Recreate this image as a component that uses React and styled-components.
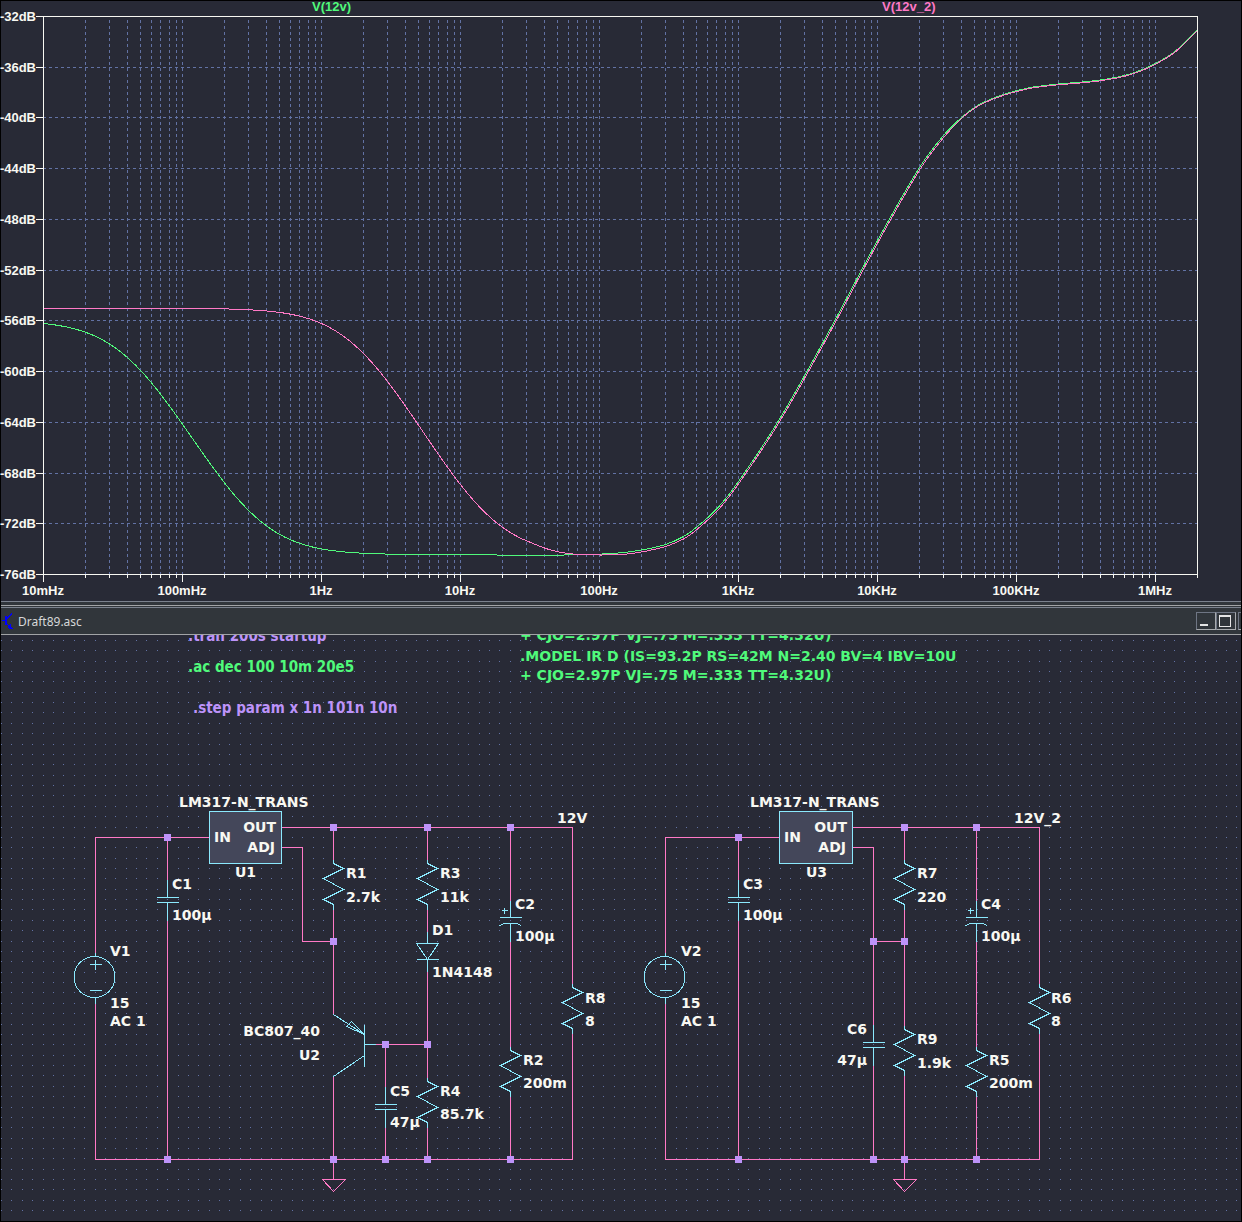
import React from "react";
import styled, { createGlobalStyle } from "styled-components";

const color = {
  background: "#282a36",
  frame: "#31363b",
  text: "#f8f8f2",
  grid: "#6272a4",
  pink: "#ff79c6",
  green: "#50fa7b",
  purple: "#bd93f9",
  cyan: "#8be9fd",
  fill: "#44475a",
};

const GlobalStyle = createGlobalStyle`
  * { box-sizing: border-box; }
  body { margin: 0; background: #000; }
`;

const Workspace = styled.main`
  display: flex;
  flex-direction: column;
  border: 1px solid #000;
  background: ${color.background};
`;

const Pane = styled.section`
  background: ${color.background};
`;

const Drawing = styled.svg`
  display: block;
  width: 100%;
  height: auto;
  overflow: ${(p) => (p.$clipped ? "hidden" : "visible")};
  shape-rendering: crispEdges;
`;

const Splitter = styled.div`
  display: flex;
  flex-direction: column;
  gap: 3px;
  background: ${color.frame};
  border-top: 1px solid #7b828e;
  border-bottom: 1px solid #7b828e;
  padding: 3px 0 1px;
`;

const SplitterEdge = styled.div`
  height: 1px;
  background: #a2a4a6;
`;

const TitleBar = styled.header`
  display: flex;
  align-items: center;
  height: 27px;
  background: ${color.frame};
  border-bottom: 1px solid #a2a4a6;
`;

const FileIcon = styled.svg`
  display: block;
  width: 17px;
  height: 18px;
  flex: none;
`;

const Title = styled.h1`
  flex: 1;
  margin: 0;
  color: #d6d8d9;
  font: 400 12px/16px "Noto Sans", sans-serif;
  padding-top: 2px;
`;

const WindowControls = styled.div`
  display: flex;
  flex: none;
  width: 45px;
  overflow: hidden;
`;

const ControlButton = styled.button`
  display: flex;
  flex: none;
  width: 20px;
  height: 18px;
  margin: 0 ${(p) => (p.$spaced ? "2px" : "0")} 0 0;
  padding: 0;
  border: 1px solid;
  border-color: #6f7684 #a8abae #a8abae #6f7684;
  background: ${color.frame};
`;

const Label = styled.text`
  fill: ${(p) => p.$color || color.text};
  font: 700 14px "DejaVu Sans", sans-serif;
`;

const Directive = styled.text`
  fill: ${(p) => p.$color};
  font: ${(p) =>
    p.$model
      ? '700 14px "DejaVu Sans", sans-serif'
      : '700 15px "DejaVu Sans Condensed", "DejaVu Sans", sans-serif'};
  white-space: pre;
`;

const AxisLabel = styled.text`
  fill: ${(p) => p.$color || color.text};
  font: 700 13px "Liberation Sans", Arial, sans-serif;
`;

const Trace = styled.path`
  fill: none;
  stroke: ${(p) => p.$color};
`;

const Stroke = styled.path`
  fill: none;
  stroke: ${(p) => p.$color};
`;

/* ---------- frequency plot ---------- */

const X0 = 43;
const X1 = 1197;
const Y0 = 16;
const Y1 = 574;
const DECADE = 139;

const levels = Array.from({ length: 12 }, (_, i) => ({
  text: `${-32 - 4 * i}dB`,
  y: Math.round(Y0 + i * 50.73 - 0.05),
}));

const decades = ["10mHz", "100mHz", "1Hz", "10Hz", "100Hz", "1KHz", "10KHz", "100KHz", "1MHz"];

const columns = [];
decades.forEach((_, d) => {
  for (let m = 1; m < 10; m += 1) {
    const x = Math.round(X0 + DECADE * (d + Math.log10(m)));
    if (x < X1) columns.push({ x, major: m === 1 });
  }
});

const dbToY = (db) => Y0 + ((-32 - db) * (Y1 - Y0)) / 44;

function shelf(from, to, start, pole, zero) {
  const points = [];
  for (let x = from; x <= to; x += 4) {
    const f = 10 ** ((x - X0) / DECADE - 2);
    const db = start - 10 * Math.log10(1 + (f / pole) ** 2) + 10 * Math.log10(1 + (f / zero) ** 2);
    points.push([x, dbToY(db)]);
  }
  return points;
}

const rise = [
  [738, 481], [777, 422], [823, 341], [877, 240], [919, 167], [943, 135], [961, 117],
  [974, 107], [985, 101], [1003, 94], [1017, 90], [1033, 86.5], [1058, 83.5], [1082, 81.5],
  [1100, 79.5], [1124, 75], [1142, 69], [1155, 63], [1175, 50.5], [1197, 29],
];

const greenPoints = [
  ...shelf(43, 480, -55.95, 0.0402, 0.338),
  [530, 555], [549, 555], [577, 554], [613, 553], [641, 549.5],
  [665, 544], [683, 536], [697, 526], [718, 506.5],
  ...rise,
];

const pinkPoints = [
  ...shelf(43, 525, -55, 1.75, 16.5),
  [544, 547.5], [556, 551], [568, 553], [580, 554], [600, 554.5], [622, 554],
  [641, 551.5], [665, 546], [683, 538.5], [697, 528.5], [718, 509],
  ...rise.map(([x, y]) => [x < 960 ? x + 1 : x, x < 960 ? y + 1 : y + 0.8]),
];

function toPath(points) {
  let d = `M${points[0][0]} ${points[0][1]}`;
  for (let i = 0; i < points.length - 1; i += 1) {
    const a = points[Math.max(i - 1, 0)];
    const b = points[i];
    const c = points[i + 1];
    const e = points[Math.min(i + 2, points.length - 1)];
    const h = (c[0] - b[0]) / 3;
    const s1 = (c[1] - a[1]) / (c[0] - a[0]);
    const s2 = (e[1] - b[1]) / (e[0] - b[0]);
    d += `C${b[0] + h} ${b[1] + h * s1} ${c[0] - h} ${c[1] - h * s2} ${c[0]} ${c[1]}`;
  }
  return d;
}

function FrequencyPlot() {
  return (
    <Drawing viewBox="1 1 1240 600" role="img" aria-label="Frequency response">
      <g transform="translate(0.5 0.5)">
        <g stroke={color.grid} strokeDasharray="3 3">
          {columns.slice(1).map(({ x }) => (
            <path key={x} d={`M${x} 19.5V${Y1}`} />
          ))}
          {levels.slice(1, -1).map(({ y }) => (
            <path key={y} d={`M${X0 - 0.5} ${y}H${X1}`} />
          ))}
        </g>
        <Trace $color={color.green} d={toPath(greenPoints)} />
        <Trace $color={color.pink} d={toPath(pinkPoints)} />
        <Stroke
          $color={color.text}
          d={
            `M${X0} ${Y0}H${X1}V577.5M${X0} ${Y0}V${Y1}H${X1}` +
            levels.map(({ y }) => `M35.5 ${y}H${X0}`).join("") +
            columns.map(({ x, major }) => `M${x} ${Y1}V${major ? 581.5 : 577.5}`).join("")
          }
        />
      </g>
      {levels.map(({ text, y }) => (
        <AxisLabel key={text} x="36" y={y + 5} textAnchor="end">{text}</AxisLabel>
      ))}
      {decades.map((text, i) => (
        <AxisLabel key={text} x={X0 + i * DECADE} y="595" textAnchor="middle">{text}</AxisLabel>
      ))}
      <AxisLabel $color={color.green} x="312" y="11">V(12v)</AxisLabel>
      <AxisLabel $color={color.pink} x="882" y="11">V(12v_2)</AxisLabel>
    </Drawing>
  );
}

/* ---------- schematic ---------- */

const dots = (() => {
  let d = "";
  for (let r = 0; r < 56; r += 1) {
    const y = 640 + Math.floor(r * 10.37 + 0.35);
    for (let c = 0; c < 120; c += 1) d += `M${Math.floor(1.6 + c * 10.38)} ${y + 0.5}h1`;
  }
  return d;
})();

const Resistor = ({ x, y }) => (
  <Stroke
    $color={color.cyan}
    d={`M${x} ${y}v4l10 5l-20 10l20 11l-20 10l10 5v5`}
  />
);

const Capacitor = ({ x, y, lead = 18 }) => (
  <Stroke
    $color={color.cyan}
    d={`M${x} ${y - lead}V${y}M${x - 10.5} ${y}h22M${x - 10.5} ${y + 5}h22M${x} ${y + 5}v${lead}`}
  />
);

const PolarCapacitor = ({ x }) => (
  <Stroke
    $color={color.cyan}
    d={`M${x} 900V917M${x - 11} 917h22M${x - 11} 925l5 -2h12l5 2M${x} 923V941M${x - 9} 910h6M${x - 6} 907v6`}
  />
);

const Source = ({ x }) => (
  <g fill="none" stroke={color.cyan}>
    <circle cx={x - 1} cy="976.5" r="20.5" />
    <path d={`M${x} 952v4M${x} 997v6M${x - 6} 964h12M${x} 959v10M${x - 6} 990h12`} />
  </g>
);

const Regulator = ({ x, width }) => (
  <rect x={x} y="811" width={width} height="52" fill={color.fill} stroke={color.cyan} />
);

const Ground = ({ x }) => (
  <Stroke $color={color.pink} d={`M${x} 1159V1179M${x - 11} 1179h23l-12 12z`} />
);

const wires = [
  "M95 952V837H209M167 837V879M167 920V1159M281 827H572V983M281 847H302V941H333",
  "M333 827V859M333 909V1014M427 827V859M427 909V931M427 971V1077M427 1127V1159",
  "M375 1044H427M385 1044V1087M385 1127V1159M333 1076V1159M510 827V900M510 941V1046",
  "M510 1095V1159M572 1033V1159H95V1003",
  "M665 952V837H779M738 837V879M738 920V1159M852 827H1039V983M852 847H873V1025",
  "M873 1065V1159M873 941H904M904 827V859M904 909V1025M904 1075V1159",
  "M976 827V900M976 941V1046M976 1095V1159M1039 1033V1159H665V1003",
].join("");

const junctions = [
  [167, 837], [333, 827], [427, 827], [510, 827], [333, 941], [385, 1044], [427, 1044],
  [167, 1159], [333, 1159], [385, 1159], [427, 1159], [510, 1159],
  [738, 837], [904, 827], [976, 827], [873, 941], [904, 941],
  [738, 1159], [873, 1159], [904, 1159], [976, 1159],
];

const labels = [
  ["LM317-N_TRANS", 179, 807], ["IN", 214, 842], ["OUT", 276, 832, "end"], ["ADJ", 275, 852, "end"],
  ["U1", 235, 877], ["C1", 172, 889], ["100µ", 172, 920], ["R1", 346, 878], ["2.7k", 346, 902],
  ["V1", 110, 956], ["15", 110, 1008], ["AC 1", 110, 1026], ["R3", 440, 878], ["11k", 440, 902],
  ["D1", 432, 935], ["1N4148", 432, 977], ["C2", 515, 909], ["100µ", 515, 941], ["12V", 557, 823],
  ["R8", 585, 1003], ["8", 585, 1026], ["BC807_40", 320, 1036, "end"], ["U2", 320, 1060, "end"],
  ["C5", 390, 1096], ["47µ", 390, 1127], ["R4", 440, 1096], ["85.7k", 440, 1119],
  ["R2", 523, 1065], ["200m", 523, 1088],
  ["LM317-N_TRANS", 750, 807], ["IN", 784, 842], ["OUT", 847, 832, "end"], ["ADJ", 846, 852, "end"],
  ["U3", 806, 877], ["C3", 743, 889], ["100µ", 743, 920], ["R7", 917, 878], ["220", 917, 902],
  ["V2", 681, 956], ["15", 681, 1008], ["AC 1", 681, 1026], ["C4", 981, 909], ["100µ", 981, 941],
  ["12V_2", 1014, 823], ["R6", 1051, 1003], ["8", 1051, 1026], ["C6", 867, 1034, "end"],
  ["47µ", 867, 1065, "end"], ["R9", 917, 1044], ["1.9k", 917, 1068], ["R5", 989, 1065],
  ["200m", 989, 1088],
];

const directives = [
  [".tran 200s startup", 188, 641, color.purple],
  [".ac dec 100 10m 20e5", 188, 672, color.green],
  [".step param x 1n 101n 10n", 193, 713, color.purple],
  ["+ CJO=2.97P VJ=.75 M=.333 TT=4.32U)", 520, 640, color.green, true],
  [".MODEL IR D (IS=93.2P RS=42M N=2.40 BV=4 IBV=10U", 520, 661, color.green, true],
  ["+ CJO=2.97P VJ=.75 M=.333 TT=4.32U)", 520, 680, color.green, true],
];

function Schematic() {
  return (
    <Drawing $clipped viewBox="1 635 1240 586" role="img" aria-label="Schematic">
      <Stroke $color={color.grid} d={dots} />
      <g transform="translate(0.5 0.5)">
        <Stroke $color={color.pink} d={wires} />
        <Regulator x={209} width={72} />
        <Regulator x={779} width={73} />
        <Source x={95} />
        <Source x={665} />
        <Capacitor x={167} y={897} />
        <Capacitor x={738} y={897} />
        <Capacitor x={385} y={1104} />
        <Capacitor x={873} y={1042} />
        <PolarCapacitor x={510} />
        <PolarCapacitor x={976} />
        <Resistor x={333} y={859} />
        <Resistor x={427} y={859} />
        <Resistor x={427} y={1077} />
        <Resistor x={510} y={1046} />
        <Resistor x={572} y={983} />
        <Resistor x={904} y={859} />
        <Resistor x={904} y={1025} />
        <Resistor x={976} y={1046} />
        <Resistor x={1039} y={983} />
        <Stroke $color={color.cyan} d="M427 931V943M416 943H438L427 959L416 943M416 959H438M427 959V971" />
        <Stroke
          $color={color.cyan}
          d="M364 1024V1066M364 1044H375M333 1014L364 1034L351 1021L346 1026L364 1034M364 1055L333 1076"
        />
        <Ground x={333} />
        <Ground x={904} />
      </g>
      {junctions.map(([x, y]) => (
        <rect key={`${x}-${y}`} x={x - 3} y={y - 3} width="7" height="7" fill={color.purple} />
      ))}
      {labels.map(([text, x, y, anchor]) => (
        <Label key={`${x}-${y}`} x={x} y={y} textAnchor={anchor || "start"}>{text}</Label>
      ))}
      {directives.map(([text, x, y, tone, model]) => (
        <Directive key={`${x}-${y}`} x={x} y={y} $color={tone} $model={model}>{text}</Directive>
      ))}
    </Drawing>
  );
}

const glyphs = {
  Minimize: <path d="M3 11h8v2H3z" fill="#e4e4e4" />,
  Maximize: <path d="M2 2h12v12H2zM3 4v9h10V4z" fill="#e4e4e4" fillRule="evenodd" />,
  Close: null,
};

function Control({ name, spaced }) {
  return (
    <ControlButton type="button" aria-label={name} $spaced={spaced}>
      <svg width="18" height="16" viewBox="0 0 18 16" shapeRendering="crispEdges">{glyphs[name]}</svg>
    </ControlButton>
  );
}

export default function App() {
  return (
    <>
      <GlobalStyle />
      <Workspace>
        <Pane>
          <FrequencyPlot />
        </Pane>
        <Splitter>
          <SplitterEdge />
        </Splitter>
        <TitleBar>
          <FileIcon viewBox="0 0 17 18" shapeRendering="crispEdges" aria-hidden="true">
            <path d="M1 8.5h3M5 7.5L11 1.5M5 11l5 5" stroke="#0000ff" fill="none" />
            <path d="M4 4h2v9H4zM7 14l3-2v3l2 2H8z" fill="#0000ff" />
          </FileIcon>
          <Title>Draft89.asc</Title>
          <WindowControls>
            <Control name="Minimize" />
            <Control name="Maximize" spaced />
            <Control name="Close" />
          </WindowControls>
        </TitleBar>
        <Pane>
          <Schematic />
        </Pane>
      </Workspace>
    </>
  );
}
